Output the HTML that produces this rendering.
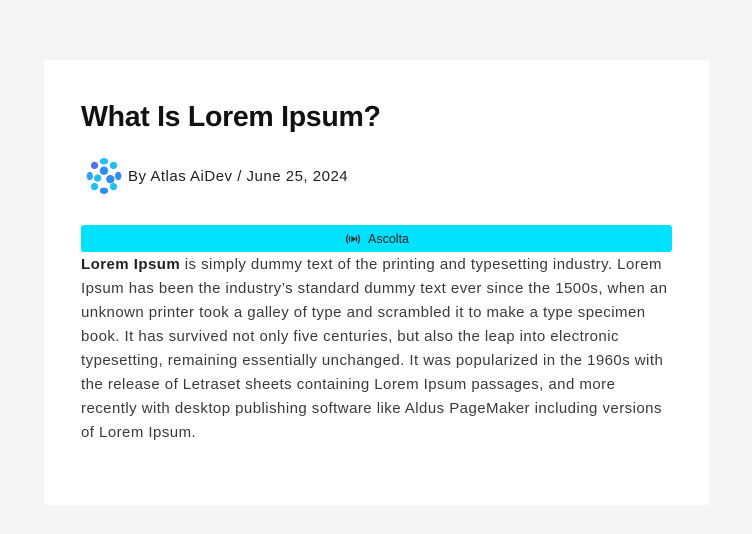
<!DOCTYPE html>
<html><head><style>
body{margin:0;background:#f5f5f5;width:752px;height:534px;overflow:hidden;font-family:"Liberation Sans",sans-serif}
.card{position:absolute;left:44px;top:60px;width:665px;height:445px;background:#fff}
h1{position:absolute;left:37px;top:37px;margin:0;font-size:28.5px;font-weight:700;color:#111;letter-spacing:-0.3px;line-height:40px}
.meta{position:absolute;left:41px;top:97px;display:flex;align-items:center;font-size:15px;color:#222;letter-spacing:0.5px}
.meta svg{margin-right:5px}
.btn{position:absolute;left:37px;top:165px;width:591px;height:27px;background:#00e1ff;border-radius:3px;display:flex;align-items:center;justify-content:center;font-size:12.5px;color:#222}
.btn svg{margin-right:6px}
p{position:absolute;left:37px;top:193px;width:595px;margin:0;font-size:15px;line-height:24px;color:#3a3a3a;letter-spacing:0.45px}
</style></head><body>
<div class="card">
<h1>What Is Lorem Ipsum?</h1>
<div class="meta"><svg width="38" height="38" viewBox="0 0 36 36">
<g fill="#1ec0f5"><ellipse cx="18" cy="4" rx="4" ry="3"/><circle cx="9" cy="8" r="3.5" fill="#5a6cf0"/><circle cx="27" cy="8" r="3.5"/><ellipse cx="4.5" cy="18" rx="3" ry="4" fill="#3aa0f5"/><ellipse cx="31.5" cy="18" rx="3" ry="4" fill="#2f8cf0"/><circle cx="18" cy="13" r="4" fill="#2f8cf0"/><circle cx="12" cy="20" r="3.5"/><circle cx="24" cy="21" r="4" fill="#2f8cf0"/><circle cx="9" cy="28" r="3.5"/><circle cx="27" cy="28" r="3.5"/><ellipse cx="18" cy="32" rx="4" ry="3" fill="#2f8cf0"/></g></svg>By Atlas AiDev / June 25, 2024</div>
<div class="btn"><svg width="18" height="12" viewBox="0 0 18 12" fill="none" stroke="#333" stroke-width="1.3"><path d="M4 1.5Q1 6 4 10.5M14 1.5Q17 6 14 10.5M6 3.5Q4.5 6 6 8.5M12 3.5Q13.5 6 12 8.5"/><path d="M8 4L11 6L8 8Z" fill="#333"/></svg>Ascolta</div>
<p><b style="color:#222">Lorem Ipsum</b> is simply dummy text of the printing and typesetting industry. Lorem Ipsum has been the industry’s standard dummy text ever since the 1500s, when an unknown printer took a galley of type and scrambled it to make a type specimen book. It has survived not only five centuries, but also the leap into electronic typesetting, remaining essentially unchanged. It was popularized in the 1960s with the release of Letraset sheets containing Lorem Ipsum passages, and more recently with desktop publishing software like Aldus PageMaker including versions of Lorem Ipsum.</p>
</div>
</body></html>
